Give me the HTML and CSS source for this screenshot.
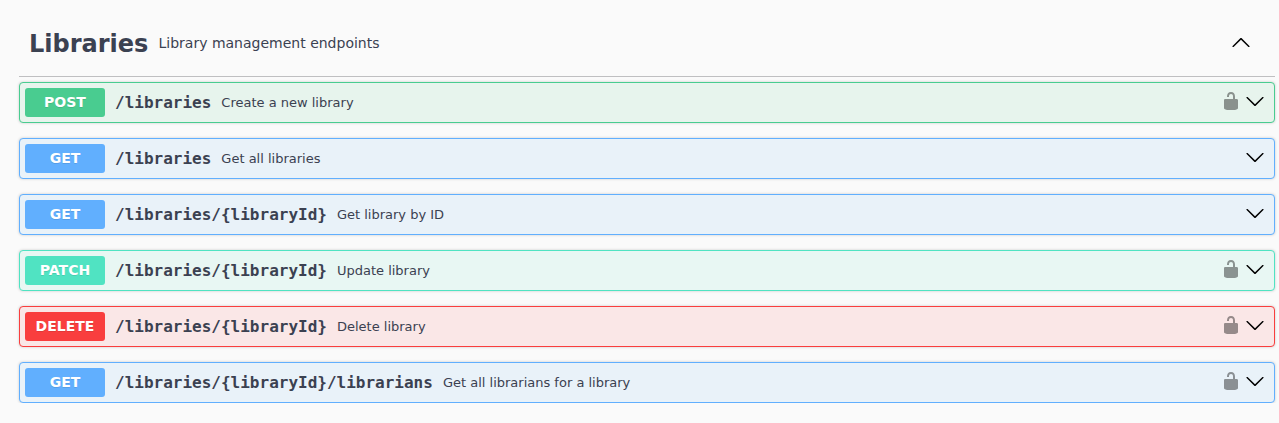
FILE: index.html
```html
<!DOCTYPE html>
<html lang="en">
<head>
<meta charset="utf-8">
<title>Libraries</title>
<link rel="stylesheet" href="styles.css">
</head>
<body>
<svg class="defs" aria-hidden="true">
  <symbol id="arrow-down" viewBox="0 0 20 20"><path d="M17.418 6.109c.272-.268.709-.268.979 0s.271.701 0 .969l-7.908 7.83c-.27.268-.707.268-.979 0l-7.908-7.83c-.27-.268-.27-.701 0-.969s.709-.268.979 0L10 13.25z"/></symbol>
  <symbol id="arrow-up" viewBox="0 0 20 20"><path d="M17.418 14.908c.272.268.709.268.979 0s.271-.701 0-.969l-7.908-7.83c-.27-.268-.707-.268-.979 0l-7.908 7.83c-.27.268-.27.701 0 .969s.709.268.979 0L10 7.767z"/></symbol>
  <symbol id="unlocked" viewBox="0 0 20 20"><path d="M15.8 8H14V5.6C14 2.703 12.665 1 10 1 7.334 1 6 2.703 6 5.6V6h2v-.801C8 3.754 8.797 3 10 3c1.203 0 2 .754 2 2.199V8H4c-.553 0-1 .646-1 1.199V17c0 .549.428 1.139.951 1.307l1.197.387C5.672 18.861 6.55 19 7.1 19h5.8c.549 0 1.428-.139 1.951-.307l1.196-.387c.524-.167.953-.757.953-1.306V9.199C17 8.646 16.352 8 15.8 8z"/></symbol>
</svg>
<main class="section">
  <h3 class="tag">
    <span class="tag-name">Libraries</span>
    <small class="tag-description">Library management endpoints</small>
    <svg class="arrow"><use href="#arrow-up"/></svg>
  </h3>
  <div class="operations">
    <div class="operation post"><span class="method">POST</span><span class="path">/libraries</span><span class="summary">Create a new library</span><svg class="lock"><use href="#unlocked"/></svg><svg class="arrow"><use href="#arrow-down"/></svg></div>
    <div class="operation get"><span class="method">GET</span><span class="path">/libraries</span><span class="summary">Get all libraries</span><svg class="arrow"><use href="#arrow-down"/></svg></div>
    <div class="operation get"><span class="method">GET</span><span class="path">/libraries/{libraryId}</span><span class="summary">Get library by ID</span><svg class="arrow"><use href="#arrow-down"/></svg></div>
    <div class="operation patch"><span class="method">PATCH</span><span class="path">/libraries/{libraryId}</span><span class="summary">Update library</span><svg class="lock"><use href="#unlocked"/></svg><svg class="arrow"><use href="#arrow-down"/></svg></div>
    <div class="operation delete"><span class="method">DELETE</span><span class="path">/libraries/{libraryId}</span><span class="summary">Delete library</span><svg class="lock"><use href="#unlocked"/></svg><svg class="arrow"><use href="#arrow-down"/></svg></div>
    <div class="operation get"><span class="method">GET</span><span class="path">/libraries/{libraryId}/librarians</span><span class="summary">Get all librarians for a library</span><svg class="lock"><use href="#unlocked"/></svg><svg class="arrow"><use href="#arrow-down"/></svg></div>
  </div>
</main>
</body>
</html>
```
FILE: styles.css
```css
* { box-sizing: border-box; }
body {
  margin: 0;
  background: #fafafa;
  color: #3b4151;
  font-family: "DejaVu Sans", sans-serif;
}
.defs { display: none; }
.section { padding: 10px 4px 0 19px; }
.tag {
  display: flex;
  align-items: center;
  height: 67px;
  margin: 0 0 5px;
  padding: 0 24px 0 10px;
  border-bottom: 1px solid #bfbfc1;
  font-size: 24px;
}
.tag-name { padding-top: 1px; line-height: 28px; }
.tag-description {
  flex: 1;
  padding-left: 10.15px;
  font-size: 14px;
  font-weight: 400;
}
.arrow { width: 20px; height: 20px; margin-bottom: 2px; flex: none; }
.operations { display: grid; gap: 15px; }
.operation {
  --accent: #61affe;
  display: flex;
  align-items: center;
  height: 41px;
  padding: 5px 9px 5px 5px;
  border: 1px solid var(--accent);
  border-radius: 4px;
  background: #e9f2f9;
  box-shadow: 0 0 3px rgba(0, 0, 0, .19);
}
.operation .arrow { margin-bottom: 3px; }
.post { --accent: #49cc90; background: #e7f4ed; }
.patch { --accent: #50e3c2; background: #e8f7f3; }
.delete { --accent: #f93e3e; background: #fae7e7; }
.method {
  width: 80px;
  flex: none;
  padding: 6px 0;
  border-radius: 3px;
  background: var(--accent);
  color: #fff;
  font-size: 14px;
  font-weight: 700;
  line-height: 17px;
  text-align: center;
  text-shadow: 0 1px 0 rgba(0, 0, 0, .1);
}
.path {
  padding: 0 10px;
  font-family: "DejaVu Sans Mono", monospace;
  font-size: 16px;
  font-weight: 600;
}
.summary { flex: 1; font-size: 13px; }
.lock { width: 20px; height: 20px; margin: 0 4px 3px 0; flex: none; opacity: .4; }
```
